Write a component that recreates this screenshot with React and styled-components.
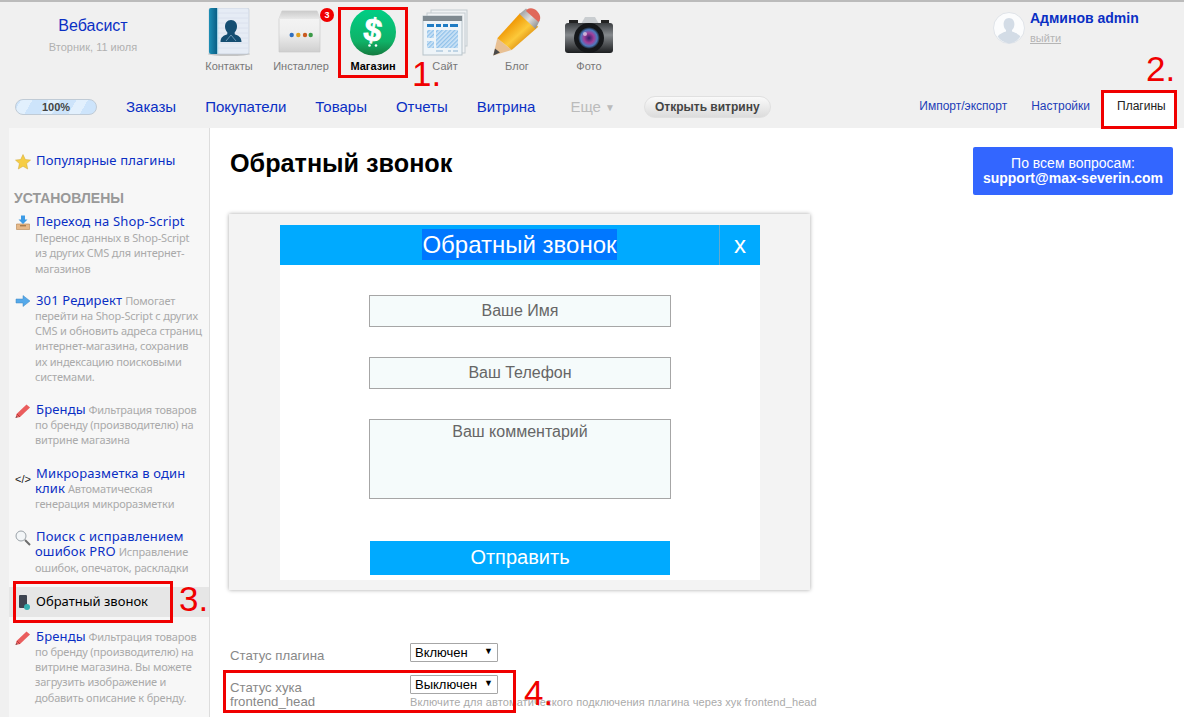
import React from "react";
import styled, { createGlobalStyle } from "styled-components";

const GlobalStyle = createGlobalStyle`
  html, body { margin: 0; padding: 0; background: #fff; }
  body { font-family: "Liberation Sans", Arial, sans-serif; }
  * { box-sizing: border-box; }
`;

const Page = styled.div`
  position: relative;
  width: 1184px;
  height: 717px;
  overflow: hidden;
  background: #f0f0f0;
`;

const Header = styled.header`
  height: 128px;
  border-top: 2px solid #bbb;
  background: #f0f0f0;
  display: flex;
  flex-direction: column;
`;

const TopRow = styled.div`
  height: 90px;
  display: flex;
`;

const Brand = styled.div`
  width: 193px;
  padding: 14px 7px 0 0;
  text-align: center;
`;

const BrandName = styled.div`
  font-size: 16px;
  line-height: 19px;
  color: #0a2fc4;
`;

const BrandDate = styled.div`
  margin-top: 6px;
  font-size: 11px;
  line-height: 13px;
  color: #b0b0b0;
`;

const Apps = styled.div`
  display: flex;
`;

const AppTile = styled.div`
  position: relative;
  width: 72px;
  padding-top: 6px;
  display: flex;
  flex-direction: column;
  align-items: center;
`;

const AppIcon = styled.div`
  width: 48px;
  height: 48px;
`;

const Badge = styled.span`
  position: absolute;
  top: 6px;
  right: 3px;
  width: 14px;
  height: 14px;
  border-radius: 50%;
  background: #f00000;
  color: #fff;
  font-size: 9px;
  font-weight: 700;
  line-height: 14px;
  text-align: center;
`;

const AppLabel = styled.div`
  margin-top: 4px;
  font-size: 11px;
  line-height: 13px;
  color: ${(p) => (p.$active ? "#000" : "#777")};
  font-weight: ${(p) => (p.$active ? 700 : 400)};
`;

const UserBox = styled.div`
  margin-left: auto;
  width: 191px;
  padding-top: 9px;
  display: flex;
  gap: 5px;
`;

const Avatar = styled.svg`
  width: 32px;
  height: 32px;
  margin-top: 1px;
`;

const UserText = styled.div`
  display: flex;
  flex-direction: column;
  align-items: flex-start;
`;

const UserName = styled.div`
  font-size: 14px;
  line-height: 15px;
  font-weight: 700;
  color: #0a2fc4;
`;

const Logout = styled.span`
  margin-top: 6px;
  font-size: 11px;
  line-height: 13px;
  color: #b5b5b5;
  text-decoration: underline;
`;

const NavRow = styled.nav`
  height: 36px;
  padding-left: 15px;
  display: flex;
  align-items: flex-start;
`;

const Progress = styled.div`
  width: 82px;
  height: 16px;
  margin-top: 7px;
  border: 1px solid #c0cbd6;
  border-radius: 8px;
  background: repeating-linear-gradient(-60deg, #cde4fb 0 14px, #e2f0fd 14px 24px);
  font-size: 11px;
  font-weight: 700;
  line-height: 14px;
  color: #444;
  text-align: center;
`;

const NavLinks = styled.div`
  margin-left: 29px;
  display: flex;
  gap: 29px;
`;

const NavLink = styled.span`
  font-size: 15px;
  line-height: 30px;
  color: #0a2fc4;
`;

const MoreLink = styled.span`
  margin-left: 35px;
  font-size: 15px;
  line-height: 30px;
  color: #bbb;
`;

const MoreArrow = styled.span`
  font-size: 10px;
  vertical-align: 1px;
`;

const StoreButton = styled.div`
  margin: 4px 0 0 29px;
  height: 22px;
  padding: 0 10px;
  border: 1px solid #e0e0e0;
  border-radius: 11px;
  background: linear-gradient(#fafafa, #dcdcdc);
  font-size: 12px;
  font-weight: 700;
  line-height: 20px;
  color: #444;
`;

const Tabs = styled.div`
  margin-left: auto;
  margin-right: 8px;
  display: flex;
`;

const TabLink = styled.span`
  margin-right: 24px;
  font-size: 12px;
  line-height: 28px;
  color: #1d3db8;
  &:nth-child(2) {
    margin-right: 13px;
  }
`;

const ActiveTab = styled.span`
  width: 73px;
  height: 36px;
  padding-left: 14px;
  background: #fff;
  font-size: 12px;
  line-height: 28px;
  color: #222;
`;

const Content = styled.div`
  padding-left: 9px;
  display: flex;
  height: 589px;
`;

const Sidebar = styled.aside`
  width: 201px;
  padding-top: 25px;
  background: #f7f7f7;
  border-right: 1px solid #ddd;
  font-family: "Noto Sans", sans-serif;
`;

const ItemIcon = styled.div`
  flex: none;
  width: 16px;
  height: 16px;
  margin-right: 4px;
`;

const PopularItem = styled.div`
  padding: 0 6px;
  display: flex;
`;

const ItemBody = styled.div`
  flex: 1;
  font-size: 11px;
  line-height: 15.2px;
`;

const ItemTitle = styled.a`
  margin-left: 1px;
  font-size: 13px;
  letter-spacing: 0.15px;
  color: #0a2fc4;
`;

const ItemText = styled.span`
  color: #aaa;
  letter-spacing: -0.2px;
  display: ${(p) => (p.$block ? "block" : "inline")};
  margin: ${(p) => (p.$block ? "1px 0 -1px" : "0")};
`;

const SideHeading = styled.div`
  margin: 21px 0 0 5px;
  font-family: "Liberation Sans", sans-serif;
  font-size: 14px;
  font-weight: 700;
  line-height: 16px;
  color: #999;
`;

const PluginList = styled.div`
  margin-top: 8px;
  display: flex;
  flex-direction: column;
  gap: 18px;
`;

const PluginItem = styled.div`
  padding: 0 7px 0 6px;
  display: flex;
`;

const CodeGlyph = styled.span`
  font-family: "Liberation Sans", sans-serif;
  font-size: 11px;
  line-height: 15px;
  color: #222;
`;

const SelectedItem = styled.div`
  height: 30px;
  margin: 12px 0;
  padding: 6px 6px 0;
  display: flex;
  background: #e6e6e6;
`;

const SelectedTitle = styled.div`
  margin-left: 1px;
  font-size: 13px;
  line-height: 16px;
  color: #000;
`;

const Main = styled.main`
  flex: 1;
  padding-left: 20px;
  background: #fff;
`;

const TitleRow = styled.div`
  padding: 19px 11px 0 0;
  display: flex;
  justify-content: space-between;
  align-items: flex-start;
`;

const PageTitle = styled.h1`
  margin: 0;
  font-size: 25.2px;
  line-height: 32px;
  font-weight: 700;
  color: #000;
`;

const SupportBox = styled.div`
  width: 200px;
  height: 48px;
  padding-top: 9px;
  border-radius: 2px;
  background: #3366ff;
  color: #fff;
  font-size: 14px;
  line-height: 15px;
  text-align: center;
`;

const SupportMail = styled.div`
  font-weight: 700;
`;

const Preview = styled.div`
  width: 581px;
  height: 376px;
  margin: 19px 0 0 -1px;
  padding: 11px 50px 10px 51px;
  background: #f3f3f3;
  box-shadow: 0 0 4px rgba(0, 0, 0, 0.35);
`;

const Widget = styled.div`
  height: 355px;
  background: #fff;
`;

const WidgetHeader = styled.div`
  height: 40px;
  display: flex;
  background: #00aaff;
  color: #fff;
`;

const WidgetTitle = styled.div`
  flex: 1;
  padding-left: 40px;
  font-size: 24px;
  line-height: 40px;
  text-align: center;
`;

const Selection = styled.span`
  background: #0077ff;
  padding: 2px 0;
`;

const WidgetClose = styled.div`
  width: 41px;
  border-left: 1px solid #66a9cc;
  font-size: 24px;
  line-height: 40px;
  text-align: center;
`;

const WidgetForm = styled.div`
  padding-top: 30px;
  display: flex;
  flex-direction: column;
  align-items: center;
`;

const Field = styled.div`
  width: 302px;
  height: 32px;
  margin-bottom: 30px;
  border: 1px solid #a6a6a6;
  background: #f5fbfb;
  font-size: 16px;
  line-height: 30px;
  color: #666;
  text-align: center;
`;

const Comment = styled(Field)`
  height: 80px;
  margin-bottom: 42px;
  line-height: 24px;
`;

const SendButton = styled.div`
  width: 300px;
  height: 34px;
  background: #00aaff;
  color: #fff;
  font-size: 20px;
  line-height: 33px;
  text-align: center;
`;

const Settings = styled.div`
  margin-top: 53px;
`;

const SettingRow = styled.div`
  height: 32px;
  display: grid;
  grid-template-columns: 180px 1fr;
`;

const SettingLabel = styled.div`
  padding-top: 6px;
  font-size: 13.2px;
  line-height: 14px;
  color: #888;
`;

const FakeSelect = styled.div`
  position: relative;
  width: 88px;
  height: 19px;
  padding-left: 4px;
  border: 1px solid #a6a6a6;
  border-radius: 1px;
  background: #fff;
  font-size: 13px;
  line-height: 17px;
  color: #000;
`;

const SelectArrow = styled.span`
  position: absolute;
  right: 4px;
  top: 0;
  font-size: 9px;
  line-height: 15px;
`;

const Hint = styled.div`
  margin-top: 2px;
  font-size: 11px;
  letter-spacing: 0.1px;
  line-height: 13px;
  color: #aaa;
`;

const Frame = styled.div`
  position: absolute;
  left: ${(p) => p.$x}px;
  top: ${(p) => p.$y}px;
  width: ${(p) => p.$w}px;
  height: ${(p) => p.$h}px;
  border: 3px solid #f00000;
`;

const Mark = styled.div`
  position: absolute;
  left: ${(p) => p.$x}px;
  top: ${(p) => p.$y}px;
  font-size: 35px;
  line-height: 40px;
  color: #f00000;
`;

/* иконки приложений */

function ContactsIcon() {
  return (
    <svg viewBox="0 0 48 48" width="48" height="48">
      <defs>
        <linearGradient id="bookSpine" x1="0" x2="1">
          <stop offset="0" stopColor="#1d8fb5" />
          <stop offset="1" stopColor="#0b5f86" />
        </linearGradient>
      </defs>
      <ellipse cx="24" cy="46" rx="21" ry="2" fill="#000" opacity=".18" />
      <rect x="4" y="0" width="40" height="46" rx="2" fill="#e6ecf5" stroke="#bcc6d3" strokeWidth=".6" />
      <path d="M13 5h30M13 10h30M13 15h30M13 20h30M13 25h30M13 30h30M13 35h30M13 40h30" stroke="#d8e0ec" strokeWidth=".8" />
      <path d="M6 0h6v46H6a2 2 0 0 1-2-2V2a2 2 0 0 1 2-2z" fill="url(#bookSpine)" />
      <path d="M12 0h1.200v46H12z" fill="#9fd0e2" />
      <path d="M26 12c4 0 6 3 6 6.500 0 2.500-1 4.500-2.300 5.800v1.900c3.300 1.200 6.800 2.600 6.800 7.800h-21c0-5.200 3.500-6.600 6.800-7.800v-1.900C21 23 20 21 20 18.500 20 15 22 12 26 12z" fill="#154e72" />
      <path d="M21 33l5-6 5 6" stroke="#7fa6c2" strokeWidth=".8" fill="none" />
    </svg>
  );
}

function InstallerIcon() {
  return (
    <svg viewBox="0 0 48 48" width="48" height="48">
      <defs>
        <linearGradient id="boxBody" x1="0" y1="0" x2="0" y2="1">
          <stop offset="0" stopColor="#f6f6f6" />
          <stop offset=".55" stopColor="#eeeeee" />
          <stop offset="1" stopColor="#cfcfcf" />
        </linearGradient>
        <linearGradient id="boxTop" x1="0" y1="0" x2="0" y2="1">
          <stop offset="0" stopColor="#cbcbcb" />
          <stop offset="1" stopColor="#e8e8e8" />
        </linearGradient>
      </defs>
      <path d="M5 3h35l3 8v33H2V11z" fill="url(#boxBody)" stroke="#c6c6c6" strokeWidth=".6" />
      <path d="M5 3h35l3 8H2z" fill="url(#boxTop)" />
      <circle cx="14.700" cy="27" r="2.200" fill="#2f6fc0" />
      <circle cx="21.300" cy="27" r="2.200" fill="#e0a020" />
      <circle cx="28" cy="27" r="2.200" fill="#c95a20" />
      <circle cx="33.700" cy="27" r="2.200" fill="#3c9a48" />
    </svg>
  );
}

function ShopIcon() {
  return (
    <svg viewBox="0 0 48 48" width="48" height="48">
      <defs>
        <linearGradient id="shopDisc" x1="0" y1="0" x2="0" y2="1">
          <stop offset="0" stopColor="#00cf86" />
          <stop offset=".7" stopColor="#0fb267" />
          <stop offset="1" stopColor="#157a3f" />
        </linearGradient>
      </defs>
      <ellipse cx="24" cy="24" rx="23" ry="23.500" fill="url(#shopDisc)" />
      <text x="24" y="33" textAnchor="middle" transform="rotate(10 24 22)" fontFamily="'Liberation Sans', sans-serif" fontWeight="700" fontSize="32" stroke="#fff" strokeWidth=".8" fill="#fff">$</text>
      <circle cx="20.500" cy="37.500" r="1.300" fill="#fff" />
      <circle cx="27" cy="37.500" r="1.300" fill="#fff" />
    </svg>
  );
}

function SiteIcon() {
  return (
    <svg viewBox="0 0 48 48" width="48" height="48">
      <defs>
        <pattern id="hatch" width="3" height="3" patternUnits="userSpaceOnUse" patternTransform="rotate(-45)">
          <rect width="3" height="3" fill="#cfe4f6" />
          <rect width="3" height="1.300" fill="#8fc1ea" />
        </pattern>
      </defs>
      <rect x="10" y="2" width="36" height="36" fill="#eef1f3" stroke="#c3cbd0" />
      <rect x="6" y="5" width="38" height="40" fill="#f1f3f5" stroke="#c3cbd0" />
      <rect x="2" y="8" width="39" height="39" fill="#eef4f8" stroke="#b7c3ca" />
      <rect x="2" y="8" width="39" height="5" fill="#7f8a91" />
      <rect x="6" y="16" width="7" height="3" fill="#1f7cc4" />
      <rect x="15" y="16" width="5" height="3" fill="#1f7cc4" />
      <rect x="22" y="16" width="5" height="3" fill="#1f7cc4" />
      <rect x="29" y="16" width="8" height="3" fill="#1f7cc4" />
      <rect x="6" y="22" width="7" height="8" fill="url(#hatch)" />
      <rect x="6" y="33" width="7" height="7" fill="url(#hatch)" />
      <rect x="15" y="22" width="22" height="18" fill="url(#hatch)" />
      <path d="M15 43h7M27 43h3M32 43h5" stroke="#8fb4d2" />
    </svg>
  );
}

function PencilIcon() {
  return (
    <svg viewBox="0 0 48 48" width="48" height="48">
      <defs>
        <linearGradient id="pencilBody" x1="0" y1="0" x2="1" y2="1">
          <stop offset=".3" stopColor="#f09a08" />
          <stop offset=".55" stopColor="#fcc93a" />
          <stop offset=".8" stopColor="#d67f06" />
        </linearGradient>
        <linearGradient id="pencilBand" x1="0" y1="0" x2="1" y2="1">
          <stop offset="0" stopColor="#8d8d8d" />
          <stop offset=".5" stopColor="#dedede" />
          <stop offset="1" stopColor="#777" />
        </linearGradient>
      </defs>
      <path d="M.300 47.500L4.300 30.300 18.700 42z" fill="#e8c093" />
      <path d="M.300 47.500l1.700-7 5 4z" fill="#4a4a4a" />
      <path d="M4.300 30.300L27 5.300 45.300 18.700 18.700 42z" fill="url(#pencilBody)" />
      <path d="M26.500 6L33 .500 47 12l-4.500 9z" fill="url(#pencilBand)" />
      <path d="M34 1.500c3-2 7-1.500 10 1.500s4 7 2.500 9.500l-1 1.500L33 3z" fill="#e0685a" />
    </svg>
  );
}

function CameraIcon() {
  return (
    <svg viewBox="0 0 48 48" width="48" height="48">
      <defs>
        <linearGradient id="camBody" x1="0" y1="0" x2="0" y2="1">
          <stop offset="0" stopColor="#3a3d40" />
          <stop offset=".4" stopColor="#85898d" />
          <stop offset="1" stopColor="#1c1e20" />
        </linearGradient>
        <radialGradient id="camLens" cx=".5" cy=".5" r=".5">
          <stop offset="0" stopColor="#2c1f6a" />
          <stop offset=".45" stopColor="#a23f9a" />
          <stop offset=".75" stopColor="#4d7bc0" />
          <stop offset="1" stopColor="#111" />
        </radialGradient>
      </defs>
      <path d="M16 16l4-7h10l4 7z" fill="#c9cdd0" />
      <rect x="4" y="12" width="9" height="4" fill="#222" />
      <rect x="36" y="12" width="8" height="4" fill="#222" />
      <rect x="0" y="15" width="48" height="30" rx="3" fill="url(#camBody)" />
      <circle cx="24" cy="30" r="15" fill="#15171a" />
      <circle cx="24" cy="30" r="11" fill="url(#camLens)" />
      <circle cx="20" cy="26" r="2" fill="#fff" opacity=".55" />
    </svg>
  );
}

/* иконки сайдбара */

function StarIcon() {
  return (
    <svg viewBox="0 0 16 16" width="16" height="16">
      <path d="M8 .500l2.300 5 5.200.6-3.900 3.500 1.100 5.400L8 12.300 3.300 15l1.100-5.400L.500 6.100l5.200-.6z" fill="#f6cd45" stroke="#cfa733" strokeWidth=".5" />
    </svg>
  );
}

function ImportIcon() {
  return (
    <svg viewBox="0 0 16 16" width="16" height="16">
      <path d="M1.500 9h13v5.500h-13z" fill="#e6b98a" stroke="#b6854f" strokeWidth=".6" />
      <path d="M5 10.800h6" stroke="#8f6234" />
      <path d="M6 .500h4v4h2.500L8 9 3.500 4.500H6z" fill="#3c9be6" />
    </svg>
  );
}

function ArrowIcon() {
  return (
    <svg viewBox="0 0 16 16" width="16" height="16">
      <path d="M1 5h7V1.500L15 7l-7 5.500V9H1z" fill="#55a9ea" stroke="#3f86c2" strokeWidth=".5" />
    </svg>
  );
}

function RedPencilIcon() {
  return (
    <svg viewBox="0 0 16 16" width="16" height="16">
      <path d="M.500 15l1-4L11.500 1.500l3.500 3L5 14z" fill="#ea5d5d" />
      <path d="M2 11l3 3" stroke="#b53b3b" />
      <path d="M.500 15l1-2 1 1z" fill="#555" />
    </svg>
  );
}

function LensIcon() {
  return (
    <svg viewBox="0 0 16 16" width="16" height="16">
      <circle cx="6" cy="6" r="5" fill="#f3f6f8" stroke="#9aa2a8" />
      <path d="M10 10l5 5" stroke="#6d6d6d" strokeWidth="2" />
    </svg>
  );
}

function CallbackIcon() {
  return (
    <svg viewBox="0 0 16 16" width="16" height="16">
      <rect x="4" y="1" width="8" height="13" rx="1" fill="#3d4450" />
      <circle cx="12" cy="13" r="3" fill="#35b0b0" />
    </svg>
  );
}

const apps = [
  { name: "Контакты", icon: <ContactsIcon /> },
  { name: "Инсталлер", icon: <InstallerIcon />, badge: 3 },
  { name: "Магазин", icon: <ShopIcon />, active: true },
  { name: "Сайт", icon: <SiteIcon /> },
  { name: "Блог", icon: <PencilIcon /> },
  { name: "Фото", icon: <CameraIcon /> },
];

const navLinks = ["Заказы", "Покупатели", "Товары", "Отчеты", "Витрина"];

const plugins = [
  {
    title: "Переход на Shop-Script",
    text: "Перенос данных в Shop-Script из других CMS для интернет-магазинов",
    icon: <ImportIcon />,
    blockText: true,
  },
  {
    title: "301 Редирект",
    text: "Помогает перейти на Shop-Script с других CMS и обновить адреса страниц интернет-магазина, сохранив их индексацию поисковыми системами.",
    icon: <ArrowIcon />,
  },
  {
    title: "Бренды",
    text: "Фильтрация товаров по бренду (производителю) на витрине магазина",
    icon: <RedPencilIcon />,
  },
  {
    title: "Микроразметка в один клик",
    text: "Автоматическая генерация микроразметки",
    icon: <CodeGlyph>&lt;/&gt;</CodeGlyph>,
  },
  {
    title: "Поиск с исправлением ошибок PRO",
    text: "Исправление ошибок, опечаток, раскладки",
    icon: <LensIcon />,
  },
];

export default function App() {
  return (
    <Page>
      <GlobalStyle />
      <Header>
        <TopRow>
          <Brand>
            <BrandName>Вебасист</BrandName>
            <BrandDate>Вторник, 11 июля</BrandDate>
          </Brand>
          <Apps>
            {apps.map((app) => (
              <AppTile key={app.name}>
                <AppIcon>{app.icon}</AppIcon>
                {app.badge && <Badge>{app.badge}</Badge>}
                <AppLabel $active={app.active}>{app.name}</AppLabel>
              </AppTile>
            ))}
          </Apps>
          <UserBox>
            <Avatar viewBox="0 0 32 32">
              <circle cx="16" cy="16" r="15.500" fill="#fbfcfd" stroke="#dfe3e8" />
              <path d="M16 6c3.400 0 5.400 2.800 5.400 6.200 0 2.600-1 4.600-2.400 5.800v1.600c3 1.100 6.800 2.300 8.400 5A15.400 15.400 0 0 1 16 31.400 15.400 15.400 0 0 1 4.600 24.600c1.600-2.700 5.400-3.900 8.400-5V18c-1.400-1.200-2.400-3.200-2.400-5.800C10.600 8.800 12.600 6 16 6z" fill="#d3dce6" />
            </Avatar>
            <UserText>
              <UserName>Админов admin</UserName>
              <Logout>выйти</Logout>
            </UserText>
          </UserBox>
        </TopRow>
        <NavRow>
          <Progress>100%</Progress>
          <NavLinks>
            {navLinks.map((link) => (
              <NavLink key={link}>{link}</NavLink>
            ))}
          </NavLinks>
          <MoreLink>
            Еще <MoreArrow>▼</MoreArrow>
          </MoreLink>
          <StoreButton>Открыть витрину</StoreButton>
          <Tabs>
            <TabLink>Импорт/экспорт</TabLink>
            <TabLink>Настройки</TabLink>
            <ActiveTab>Плагины</ActiveTab>
          </Tabs>
        </NavRow>
      </Header>

      <Content>
        <Sidebar>
          <PopularItem>
            <ItemIcon>
              <StarIcon />
            </ItemIcon>
            <ItemBody>
              <ItemTitle>Популярные плагины</ItemTitle>
            </ItemBody>
          </PopularItem>
          <SideHeading>УСТАНОВЛЕНЫ</SideHeading>
          <PluginList>
            {plugins.map((plugin) => (
              <PluginItem key={plugin.title}>
                <ItemIcon>{plugin.icon}</ItemIcon>
                <ItemBody>
                  <ItemTitle>{plugin.title}</ItemTitle>{" "}
                  <ItemText $block={plugin.blockText}>{plugin.text}</ItemText>
                </ItemBody>
              </PluginItem>
            ))}
          </PluginList>
          <SelectedItem>
            <ItemIcon>
              <CallbackIcon />
            </ItemIcon>
            <SelectedTitle>Обратный звонок</SelectedTitle>
          </SelectedItem>
          <PluginItem>
            <ItemIcon>
              <RedPencilIcon />
            </ItemIcon>
            <ItemBody>
              <ItemTitle>Бренды</ItemTitle>{" "}
              <ItemText>
                Фильтрация товаров по бренду (производителю) на витрине магазина. Вы можете загрузить
                изображение и добавить описание к бренду.
              </ItemText>
            </ItemBody>
          </PluginItem>
        </Sidebar>

        <Main>
          <TitleRow>
            <PageTitle>Обратный звонок</PageTitle>
            <SupportBox>
              По всем вопросам:
              <SupportMail>support@max-severin.com</SupportMail>
            </SupportBox>
          </TitleRow>

          <Preview>
            <Widget>
              <WidgetHeader>
                <WidgetTitle>
                  <Selection>Обратный звонок</Selection>
                </WidgetTitle>
                <WidgetClose>x</WidgetClose>
              </WidgetHeader>
              <WidgetForm>
                <Field>Ваше Имя</Field>
                <Field>Ваш Телефон</Field>
                <Comment>Ваш комментарий</Comment>
                <SendButton>Отправить</SendButton>
              </WidgetForm>
            </Widget>
          </Preview>

          <Settings>
            <SettingRow>
              <SettingLabel>Статус плагина</SettingLabel>
              <div>
                <FakeSelect>
                  Включен
                  <SelectArrow>▼</SelectArrow>
                </FakeSelect>
              </div>
            </SettingRow>
            <SettingRow>
              <SettingLabel>
                Статус хука
                <br />
                frontend_head
              </SettingLabel>
              <div>
                <FakeSelect>
                  Выключен
                  <SelectArrow>▼</SelectArrow>
                </FakeSelect>
                <Hint>Включите для автоматического подключения плагина через хук frontend_head</Hint>
              </div>
            </SettingRow>
          </Settings>
        </Main>
      </Content>

      <Frame $x={338} $y={7} $w={70} $h={71} />
      <Frame $x={1101} $y={90} $w={76} $h={39} />
      <Frame $x={13} $y={581} $w={160} $h={42} />
      <Frame $x={223} $y={670} $w={293} $h={43} />
      <Mark $x={412} $y={54}>1.</Mark>
      <Mark $x={1146} $y={49}>2.</Mark>
      <Mark $x={179} $y={579}>3.</Mark>
      <Mark $x={524} $y={673}>4.</Mark>
    </Page>
  );
}
